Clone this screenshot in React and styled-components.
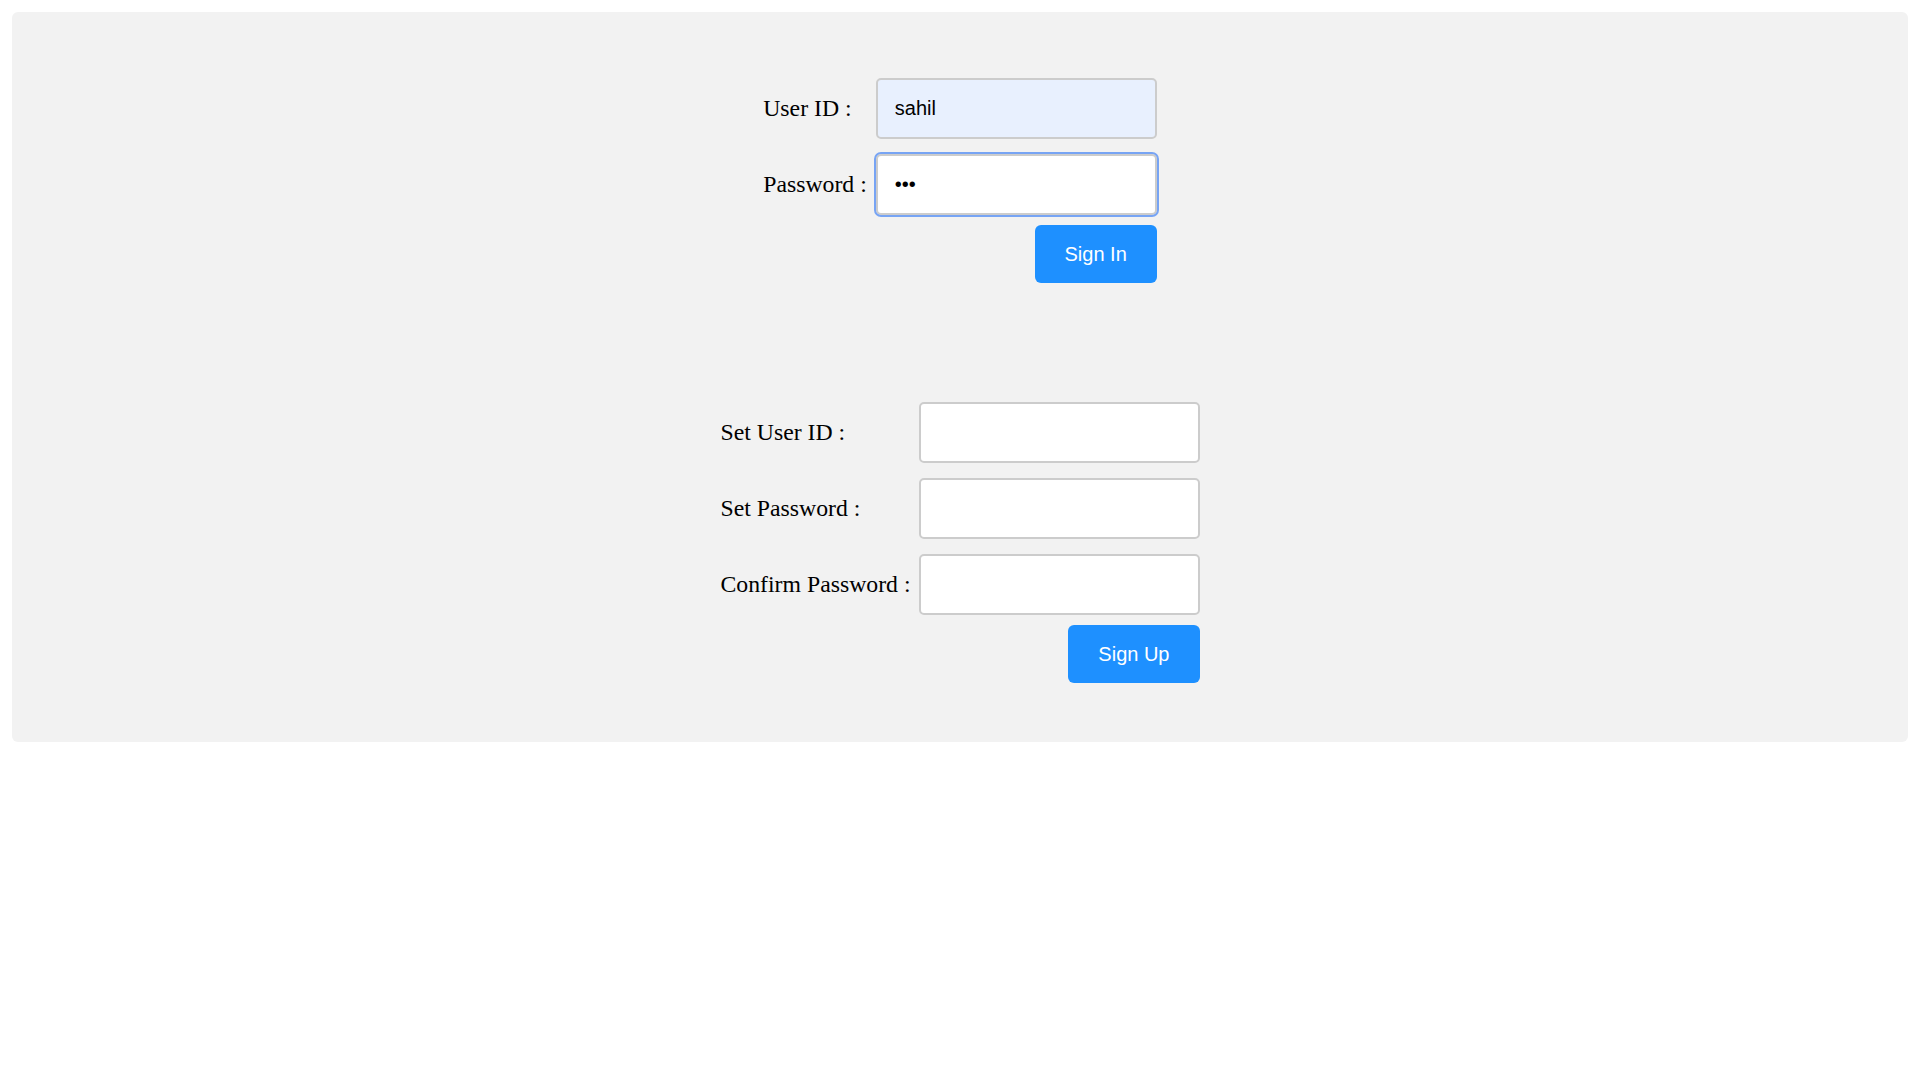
import React from 'react'
import { styled, createGlobalStyle } from 'styled-components'

const GlobalStyle = createGlobalStyle`
  body {
    margin: 0;
    padding: 12px;
    background: #fff;
    font-family: "Liberation Serif", "Times New Roman", serif;
  }
`;

const Panel = styled.div`
  background: #f2f2f2;
  border-radius: 6px;
  padding: 66px 0 59px;
  display: flex;
  flex-direction: column;
  align-items: center;
  gap: 119px;
`;

const Form = styled.form`
  display: grid;
  grid-template-columns: auto 281px;
  column-gap: ${p => p.$gap || 8}px;
  row-gap: 15px;
  align-items: center;
`;

const Label = styled.label`
  font-family: "Liberation Serif", "Times New Roman", serif;
  font-size: 23.75px;
  color: #000;
  white-space: nowrap;
`;

const Input = styled.input`
  box-sizing: border-box;
  width: 281px;
  height: 61px;
  padding: 0 17px;
  border: 2px solid #ccc;
  border-radius: 5px;
  background: ${p => (p.$filled ? '#e8f0fe' : '#fff')};
  font-family: "Liberation Sans", Arial, sans-serif;
  font-size: 20px;
  color: #000;
  outline: ${p => (p.$focused ? '2px solid #77a4f4' : 'none')};
  outline-offset: 0;
`;

const Actions = styled.div`
  grid-column: 2;
  display: flex;
  justify-content: flex-end;
  margin-top: -5px;
`;

const Button = styled.button`
  background: #1e90ff;
  color: #fff;
  border: none;
  border-radius: 6px;
  padding: 17px 30px;
  font-family: "Liberation Sans", Arial, sans-serif;
  font-size: 20px;
  line-height: 24px;
  cursor: pointer;
`;

const App = () => {
  return (
    <>
      <GlobalStyle />
      <Panel>

        <Form $gap={9} onSubmit={e => e.preventDefault()}>
          <Label htmlFor="uid">User ID :</Label>
          <Input id="uid" type="text" defaultValue="sahil" $filled />
          <Label htmlFor="pwd">Password :</Label>
          <Input id="pwd" type="password" defaultValue="abc" $focused />
          <Actions>
            <Button type="submit">Sign In</Button>
          </Actions>
        </Form>

        <Form onSubmit={e => e.preventDefault()}>
          <Label htmlFor="suid">Set User ID :</Label>
          <Input id="suid" type="text" />
          <Label htmlFor="spwd">Set Password :</Label>
          <Input id="spwd" type="password" />
          <Label htmlFor="cpwd">Confirm Password :</Label>
          <Input id="cpwd" type="password" />
          <Actions>
            <Button type="submit">Sign Up</Button>
          </Actions>
        </Form>

      </Panel>
    </>
  )
}

export default App
